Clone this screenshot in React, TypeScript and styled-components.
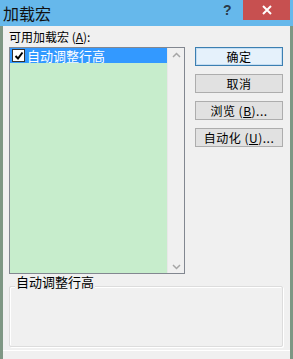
import React from "react";
import styled, { createGlobalStyle } from "styled-components";

const Global = createGlobalStyle`
  html, body { margin: 0; padding: 0; width: 293px; height: 359px; overflow: hidden; background: #f0f0f0; }
  * { box-sizing: border-box; }
`;

const font = `"Noto Sans CJK SC", "Noto Sans", sans-serif`;

const Window = styled.div`
  width: 293px;
  height: 359px;
  display: flex;
  flex-direction: column;
  background: #f0f0f0;
  border-left: 3px solid #7e9784;
  border-right: 3px solid #7e9784;
  font-family: ${font};
`;

const TitleBar = styled.div`
  height: 26px;
  margin: 0 -3px;
  background: #66b8eb;
  display: flex;
  align-items: flex-start;
  flex-shrink: 0;
`;

const Title = styled.div`
  font-size: 16px;
  line-height: 26px;
  color: #111;
  padding-left: 3px;
  flex: 1;
`;

const Help = styled.div`
  width: 20px;
  font-size: 14px;
  font-weight: bold;
  line-height: 16px;
  color: #2a3a48;
  margin-top: 2px;
  font-family: "Liberation Sans", sans-serif;
`;

const Close = styled.div`
  width: 47px;
  height: 20px;
  margin-right: 3px;
  background: #c75050;
  display: flex;
  align-items: center;
  justify-content: center;
`;

const Body = styled.div`
  flex: 1;
  display: flex;
  flex-direction: column;
  padding: 3px 6px 0 6px;
`;

const Label = styled.div`
  font-size: 12px;
  line-height: 16px;
  color: #000;
  height: 18px;
  u { text-decoration: underline; }
`;

const Main = styled.div`
  display: flex;
  gap: 10px;
`;

const ListBox = styled.div`
  width: 176px;
  height: 227px;
  border: 1px solid #828790;
  background: #c7edcc;
  display: flex;
`;

const ListItems = styled.div`
  flex: 1;
`;

const Item = styled.div<{ $selected?: boolean }>`
  height: 15px;
  display: flex;
  align-items: center;
  gap: 2px;
  padding-left: 2px;
  background: ${(p) => (p.$selected ? "#3399ff" : "transparent")};
  color: ${(p) => (p.$selected ? "#fff" : "#000")};
  font-size: 13px;
  line-height: 15px;
`;

const Check = styled.div`
  width: 13px;
  height: 13px;
  border: 1px solid #333;
  background: #fff;
  display: flex;
  align-items: center;
  justify-content: center;
`;

const ScrollBar = styled.div`
  width: 17px;
  background: #f0f0f0;
  border-left: 1px solid #e8e8e8;
  display: flex;
  flex-direction: column;
  justify-content: space-between;
  align-items: center;
  padding: 4px 0 3px;
`;

const Buttons = styled.div`
  display: flex;
  flex-direction: column;
  gap: 8px;
`;

const Button = styled.div<{ $default?: boolean }>`
  width: 88px;
  height: 19px;
  border: 1px solid ${(p) => (p.$default ? "#3c7fb1" : "#adadad")};
  background: ${(p) => (p.$default ? "#e5f1fb" : "#e1e1e1")};
  box-shadow: ${(p) => (p.$default ? "inset 0 0 0 1px #c4ddf2" : "none")};
  font-size: 12px;
  line-height: 17px;
  text-align: center;
  color: #000;
  letter-spacing: 0.5px;
  u { text-decoration: underline; }
`;

const Group = styled.div`
  position: relative;
  margin-top: 12px;
  width: 274px;
  height: 61px;
  border: 1px solid #dcdcdc;
  box-shadow: 1px 1px 0 #fff, inset 1px 1px 0 #fff;
  border-radius: 2px;
`;

const GroupLabel = styled.div`
  position: absolute;
  top: -13px;
  left: 5px;
  padding: 0 1px;
  background: #f0f0f0;
  font-size: 13px;
  line-height: 16px;
  color: #000;
`;

const BottomEdge = styled.div`
  margin: 3px -6px 0;
  height: 4px;
  border-top: 1px solid #fff;
`;

const Chevron = ({ up }: { up?: boolean }) => (
  <svg width="9" height="6" viewBox="0 0 9 6">
    <path
      d={up ? "M1 5 L4.5 1.5 L8 5" : "M1 1 L4.5 4.5 L8 1"}
      fill="none"
      stroke="#a6a6a6"
      strokeWidth="1.5"
    />
  </svg>
);

export default function App() {
  return (
    <>
      <Global />
      <Window>
        <TitleBar>
          <Title>加载宏</Title>
          <Help>?</Help>
          <Close>
            <svg width="10" height="10" viewBox="0 0 10 10">
              <path d="M1 1 L9 9 M9 1 L1 9" stroke="#fff" strokeWidth="2" />
            </svg>
          </Close>
        </TitleBar>
        <Body>
          <Label>
            可用加载宏 (<u>A</u>):
          </Label>
          <Main>
            <ListBox>
              <ListItems>
                <Item $selected>
                  <Check>
                    <svg width="10" height="10" viewBox="0 0 10 10">
                      <path d="M1.5 5 L4 7.5 L8.5 1.5" fill="none" stroke="#000" strokeWidth="2" />
                    </svg>
                  </Check>
                  自动调整行高
                </Item>
              </ListItems>
              <ScrollBar>
                <Chevron up />
                <Chevron />
              </ScrollBar>
            </ListBox>
            <Buttons>
              <Button $default>确定</Button>
              <Button>取消</Button>
              <Button>
                浏览 (<u>B</u>)...
              </Button>
              <Button>
                自动化 (<u>U</u>)...
              </Button>
            </Buttons>
          </Main>
          <Group>
            <GroupLabel>自动调整行高</GroupLabel>
          </Group>
          <BottomEdge />
        </Body>
      </Window>
    </>
  );
}
